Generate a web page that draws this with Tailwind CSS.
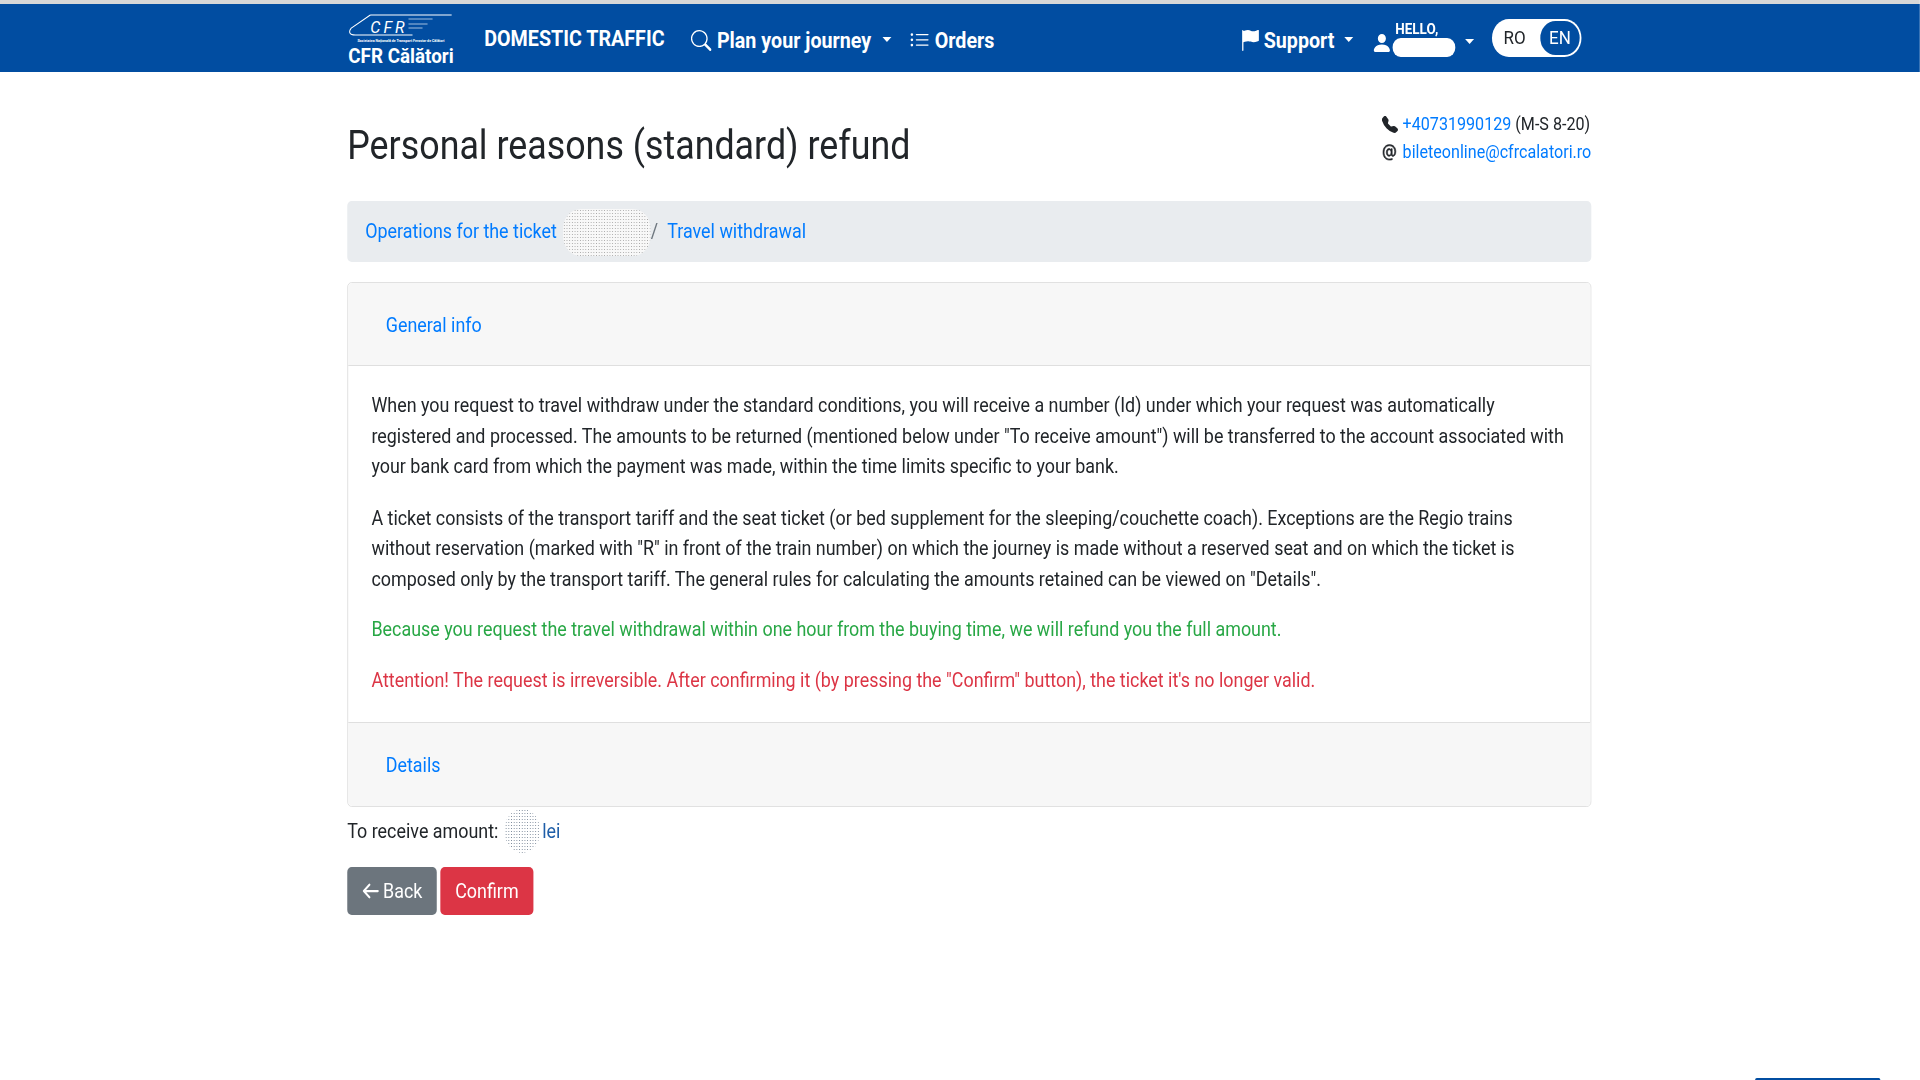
<!DOCTYPE html>
<html lang="en">
<head>
<meta charset="utf-8">
<title>Personal reasons (standard) refund</title>
<script src="https://cdn.jsdelivr.net/npm/@tailwindcss/browser@4"></script>
</head>
<body class="bg-white font-['Roboto',sans-serif] text-[#212529] h-[1080px] overflow-hidden">
<div class="w-[1920px] h-[1080px] overflow-hidden">
<div class="w-[2145px] h-[1080px] origin-left scale-x-[0.895] relative">
<div class="h-1 bg-[#d8d8d8]"></div>
<nav class="h-[68px] bg-[#014da1] pl-[388px] pr-[378px] flex items-center text-white">
  <div class="w-[120px] h-[58px] shrink-0 flex flex-col">
    <svg class="w-[120px] h-[28px] shrink-0" viewBox="0 0 107 28" preserveAspectRatio="none" fill="none">
      <path d="M23 6H104M23 6L4 19C1 23 2 26 8 26H65" stroke="white" stroke-width="1"/>
      <path d="M61 10H85M61 15H80M61 19H75" stroke="white" stroke-width=".8" opacity=".8"/>
      <text x="23" y="24" fill="white" font-family="Roboto" font-style="italic" font-size="16" letter-spacing="3">CFR</text>
    </svg>
    <span class="mt-[1px] h-[6px] leading-[6px] text-[4px] font-bold whitespace-nowrap text-center">Societatea Națională de Transport Feroviar de Călători</span>
    <span class="mt-[1px] h-[22px] leading-[22px] text-[21px] font-bold whitespace-nowrap text-center">CFR Călători</span>
  </div>
  <span class="ml-[33px] font-bold text-[22px] whitespace-nowrap w-[202px]">DOMESTIC TRAFFIC</span>
  <svg class="ml-[29px] w-[23px] h-[21px] shrink-0 mt-[4px]" viewBox="0 0 16 16" preserveAspectRatio="none" fill="white"><path d="M11.742 10.344a6.5 6.5 0 1 0-1.397 1.398h-.001c.03.04.062.078.098.115l3.85 3.85a1 1 0 0 0 1.415-1.414l-3.85-3.85a1.007 1.007 0 0 0-.115-.1zM12 6.5a5.5 5.5 0 1 1-11 0 5.5 5.5 0 0 1 11 0z"/></svg>
  <span class="ml-[6px] font-bold text-[22px] whitespace-nowrap mt-[5px]">Plan your journey</span>
  <span class="ml-[13px] mt-[3px] w-0 h-0 border-x-[5px] border-x-transparent border-t-[5px] border-t-white"></span>
  <svg class="ml-[20px] w-[23px] h-[21px] shrink-0 mt-[4px]" viewBox="0 0 16 16" preserveAspectRatio="none" fill="white"><path d="M5 11.5a.5.5 0 0 1 .5-.5h9a.5.5 0 0 1 0 1h-9a.5.5 0 0 1-.5-.5zm0-4a.5.5 0 0 1 .5-.5h9a.5.5 0 0 1 0 1h-9a.5.5 0 0 1-.5-.5zm0-4a.5.5 0 0 1 .5-.5h9a.5.5 0 0 1 0 1h-9a.5.5 0 0 1-.5-.5zm-3 1a1 1 0 1 0 0-2 1 1 0 0 0 0 2zm0 4a1 1 0 1 0 0-2 1 1 0 0 0 0 2zm0 4a1 1 0 1 0 0-2 1 1 0 0 0 0 2z"/></svg>
  <span class="ml-[5px] font-bold text-[22px] mt-[5px]">Orders</span>
  <div class="ml-auto flex items-center">
    <svg class="w-[23px] h-[21px] shrink-0 mt-[4px]" viewBox="0 0 16 16" preserveAspectRatio="none" fill="white"><path d="M14.778.085A.5.5 0 0 1 15 .5V8a.5.5 0 0 1-.314.464c-.264.095-.631.223-1.047.35-.816.252-1.879.523-2.71.523-.847 0-1.548-.28-2.158-.525C7.68 8.71 7.14 8.5 6.5 8.5c-.7 0-1.638.23-2.437.477A19.626 19.626 0 0 0 3 9.342V15.5a.5.5 0 0 1-1 0V.5a.5.5 0 0 1 1 0v.282c.226-.079.496-.17.79-.26C4.606.272 5.67 0 6.5 0c.84 0 1.524.277 2.121.519C9.286.788 9.828 1 10.5 1c.7 0 1.638-.23 2.437-.477a19.587 19.587 0 0 0 1.349-.476z"/></svg>
    <span class="ml-[4px] font-bold text-[22px] mt-[5px]">Support</span>
    <span class="ml-[11px] mt-[3px] w-0 h-0 border-x-[5px] border-x-transparent border-t-[5px] border-t-white"></span>
    <svg class="ml-[20px] w-[24px] h-[24px] shrink-0 mt-[10px]" viewBox="0 0 16 16" fill="white"><path d="M3 14s-1 0-1-1 1-4 6-4 6 3 6 4-1 1-1 1H3zm5-6a3 3 0 1 0 0-6 3 3 0 0 0 0 6z"/></svg>
    <div class="relative w-[70px] h-[42px]">
      <span class="absolute left-[3px] top-[1px] font-bold text-[15px]">HELLO,</span>
      <span class="absolute left-0 top-[21px] w-[70px] h-[19px] rounded-[9px] bg-white"></span>
    </div>
    <span class="ml-[11px] mt-[6px] w-0 h-0 border-x-[5px] border-x-transparent border-t-[5px] border-t-white"></span>
    <div class="ml-[20px] w-[100px] h-[38px] rounded-[19px] bg-white flex items-center pl-[13px] pr-[2px] text-[19px] justify-between">
      <span class="text-[#212529]">RO</span>
      <span class="w-[44px] h-[34px] rounded-[17px] bg-[#014da1] text-white flex items-center justify-center">EN</span>
    </div>
  </div>
</nav>

<main class="w-[1390px] ml-[388px]">
  <div class="flex justify-between h-[129px]">
    <h1 class="text-[40px] leading-[48px] mt-[50px] whitespace-nowrap">Personal reasons (standard) refund</h1>
    <div class="mt-[38px] text-[18px] leading-[28px] shrink-0">
      <div class="flex items-center whitespace-nowrap"><svg class="w-[18px] h-[17px] mr-[5px] shrink-0" viewBox="0 0 16 16" preserveAspectRatio="none" fill="#212529"><path d="M1.885.511a1.745 1.745 0 0 1 2.61.163L6.29 2.98c.329.423.445.974.315 1.494l-.547 2.19a.678.678 0 0 0 .178.643l2.457 2.457a.678.678 0 0 0 .644.178l2.189-.547a1.745 1.745 0 0 1 1.494.315l2.306 1.794c.829.645.905 1.87.163 2.611l-1.034 1.034c-.74.74-1.846 1.065-2.877.702a18.634 18.634 0 0 1-7.01-4.42 18.634 18.634 0 0 1-4.42-7.009c-.362-1.03-.037-2.137.703-2.877L1.885.511z"/></svg><a class="text-[#007bff]">+40731990129</a>&nbsp;(M-S 8-20)</div>
      <div class="flex items-center whitespace-nowrap"><svg class="w-[18px] h-[19px] mr-[5px] shrink-0" viewBox="1 1 14 14" preserveAspectRatio="none" fill="#212529" stroke="#212529" stroke-width=".5"><path d="M13.106 7.222c0-2.967-2.249-5.032-5.482-5.032-3.35 0-5.646 2.318-5.646 5.702 0 3.493 2.235 5.708 5.762 5.708.862 0 1.689-.123 2.304-.335v-.862c-.43.199-1.354.328-2.29.328-2.926 0-4.813-1.88-4.813-4.798 0-2.844 1.921-4.881 4.594-4.881 2.735 0 4.608 1.688 4.608 4.156 0 1.682-.554 2.769-1.416 2.769-.492 0-.772-.28-.772-.76V5.206H8.923v.834h-.11c-.266-.595-.881-.964-1.6-.964-1.4 0-2.378 1.162-2.378 2.823 0 1.737.957 2.906 2.379 2.906.8 0 1.415-.39 1.709-1.087h.11c.081.67.703 1.148 1.503 1.148 1.572 0 2.57-1.415 2.57-3.643zm-7.177.704c0-1.197.54-1.907 1.456-1.907.93 0 1.524.738 1.524 1.907S8.308 9.84 7.371 9.84c-.895 0-1.442-.725-1.442-1.914z"/></svg><a class="text-[#007bff]">bileteonline@cfrcalatori.ro</a></div>
    </div>
  </div>

  <div class="h-[61px] rounded-[5px] bg-[#e9ecef] flex items-center pl-5 text-[20px] whitespace-nowrap">
    <a class="text-[#007bff] -mt-[2px]">Operations for the ticket</a>
    <span class="w-[98px] h-[47px] ml-[7px] rounded-[20px] bg-[#f8f8f8] bg-[radial-gradient(#a8a8a8_0.5px,transparent_0.8px)] bg-size-[3px_3px] mt-[2px]"></span>
    <span class="text-[#6c757d] -mt-[2px]">/</span>
    <a class="text-[#007bff] ml-[10px] -mt-[2px]">Travel withdrawal</a>
  </div>

  <div class="mt-5 h-[525px] rounded-[5px] border border-[#dfdfdf] flex flex-col text-[20px]">
    <div class="h-[83px] shrink-0 bg-[#f7f7f7] border-b border-[#dfdfdf] flex items-center pl-[42px] pt-[2px] rounded-t-[5px]"><a class="text-[#007bff]">General info</a></div>
    <div class="flex-1 px-[26px] pt-[24px] leading-[30.5px]">
      <p>When you request to travel withdraw under the standard conditions, you will receive a number (Id) under which your request was automatically registered and processed. The amounts to be returned (mentioned below under "To receive amount") will be transferred to the account associated with your bank card from which the payment was made, within the time limits specific to your bank.</p>
      <p class="mt-[21px]">A ticket consists of the transport tariff and the seat ticket (or bed supplement for the sleeping/couchette coach). Exceptions are the Regio trains without reservation (marked with "R" in front of the train number) on which the journey is made without a reserved seat and on which the ticket is composed only by the transport tariff. The general rules for calculating the amounts retained can be viewed on "Details".</p>
      <p class="mt-[20px] text-[#28a745]">Because you request the travel withdrawal within one hour from the buying time, we will refund you the full amount.</p>
      <p class="mt-[20px] text-[#dc3545]">Attention! The request is irreversible. After confirming it (by pressing the "Confirm" button), the ticket it's no longer valid.</p>
    </div>
    <div class="h-[84px] shrink-0 bg-[#f7f7f7] border-t border-[#dfdfdf] flex items-center pl-[42px] rounded-b-[5px]"><a class="text-[#007bff]">Details</a></div>
  </div>

  <div class="mt-[2px] h-[44px] flex items-center text-[20px]">
    <span>To receive amount:</span>
    <span class="w-[39px] h-[44px] ml-[7px] rounded-full bg-[radial-gradient(#7f8c9c_0.5px,transparent_0.9px)] bg-size-[3px_3px]"></span>
    <span class="ml-[3px] text-[#1f5ea8]">lei</span>
  </div>

  <div class="mt-[14px] flex gap-[4px] text-[20px]">
    <button class="w-[100px] h-[48px] rounded-[5px] bg-[#6c757d] text-white flex items-center justify-center gap-[4px]"><svg class="w-[20px] h-[20px]" viewBox="0 0 16 16" fill="none" stroke="white" stroke-width="1.8" stroke-linecap="round" stroke-linejoin="round"><path d="M14.5 8H2M7 3 2 8l5 5"/></svg>Back</button>
    <button class="w-[104px] h-[48px] rounded-[5px] bg-[#dc3545] text-white">Confirm</button>
  </div>
</main>

<div class="absolute left-[1961px] top-[1078px] w-[140px] h-[2px] rounded-t-[4px] bg-[#014da1]"></div>
</div>
</div>
</body>
</html>
